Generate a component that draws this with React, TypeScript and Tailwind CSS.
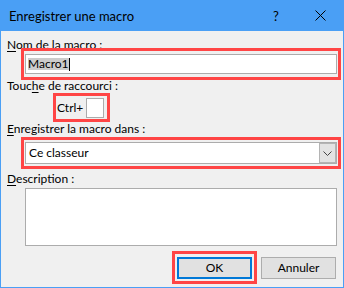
import React from 'react'

const font = { fontFamily: 'Lato, "Noto Sans", sans-serif' }

function Mnemonic({ first, rest }: { first: string; rest: string }) {
  return (
    <>
      <span className="underline underline-offset-[2px] decoration-1">{first}</span>
      {rest}
    </>
  )
}

export default function App() {
  return (
    <div
      className="w-[344px] h-[288px] flex flex-col bg-[#f0f0f0] border-x border-b border-[#4a9ff5] text-[12px] leading-[16px] text-black"
      style={font}
    >
      {/* Title bar */}
      <div className="h-[31px] shrink-0 flex items-center bg-[#4a9ff5] pl-[8px] pr-[17px]">
        <span className="flex-1 text-[13px]">Enregistrer une macro</span>
        <span className="w-[6px] text-[13px]">?</span>
        <svg className="ml-[36px]" width="11" height="11" viewBox="0 0 11 11">
          <path d="M0.5 0.5 L10.5 10.5 M10.5 0.5 L0.5 10.5" stroke="#000" strokeWidth="1" />
        </svg>
      </div>

      {/* Body */}
      <div className="flex flex-col pl-[6px]">
        <div className="mt-[6px]">
          <Mnemonic first="N" rest="om de la macro :" />
        </div>

        <div className="-mt-[5px] ml-[14px] w-[320px] border-[3px] border-[#ff4545] pt-[3px] pb-[3px] pl-[1px] pr-[1px]">
          <div className="h-[20px] w-[312px] bg-white border border-[#acacac] flex items-center pl-[2px]">
            <span className="inline-block h-[12px] leading-[12px] bg-[#cccccc]">Macro1</span>
            <span className="w-px h-[13px] bg-black" />
          </div>
        </div>

        <div className="-mt-[2px]">
          Touc<span className="underline underline-offset-[2px] decoration-1">h</span>e de raccourci :
        </div>

        <div className="-mt-[1px] ml-[46px] w-[57px] border-[3px] border-[#ff4545] pt-[2px] pb-[1px] pl-[1px] pr-[3px] flex items-center justify-between">
          <span>Ctrl+</span>
          <div className="w-[18px] h-[20px] bg-white border border-[#acacac]" />
        </div>

        <div className="-mt-[1px]">
          <Mnemonic first="E" rest="nregistrer la macro dans :" />
        </div>

        <div className="ml-[14px] w-[320px] border-[3px] border-[#ff4545] py-[2px] pl-[1px] pr-[1px]">
          <div className="h-[22px] w-[312px] bg-white border border-[#acacac] flex items-center">
            <span className="flex-1 pl-[3px]">Ce classeur</span>
            <div className="w-[17px] h-full bg-[#e3e3e3] border border-[#b4b4b4] flex items-center justify-center">
              <svg width="9" height="5" viewBox="0 0 9 5">
                <path d="M0.5 0.5 L4.5 4.5 L8.5 0.5" fill="none" stroke="#444" strokeWidth="1" />
              </svg>
            </div>
          </div>
        </div>

        <div className="mt-[2px]">
          <Mnemonic first="D" rest="escription :" />
        </div>

        <div className="mt-[1px] ml-[18px] w-[312px] h-[58px] bg-white border border-[#acacac]" />

        <div className="mt-[5px] flex items-start">
          <div className="ml-[165px] w-[85px] border-[3px] border-[#ff4545] pt-[3px] pb-[2px] pl-[2px] pr-[2px]">
            <button className="w-[75px] h-[22px] bg-[#e1e1e1] border-2 border-[#0078d7] flex items-center justify-center">
              OK
            </button>
          </div>
          <button className="mt-[6px] ml-[4px] w-[75px] h-[22px] bg-[#e1e1e1] border border-[#adadad] flex items-center justify-center">
            Annuler
          </button>
        </div>
      </div>
    </div>
  )
}
